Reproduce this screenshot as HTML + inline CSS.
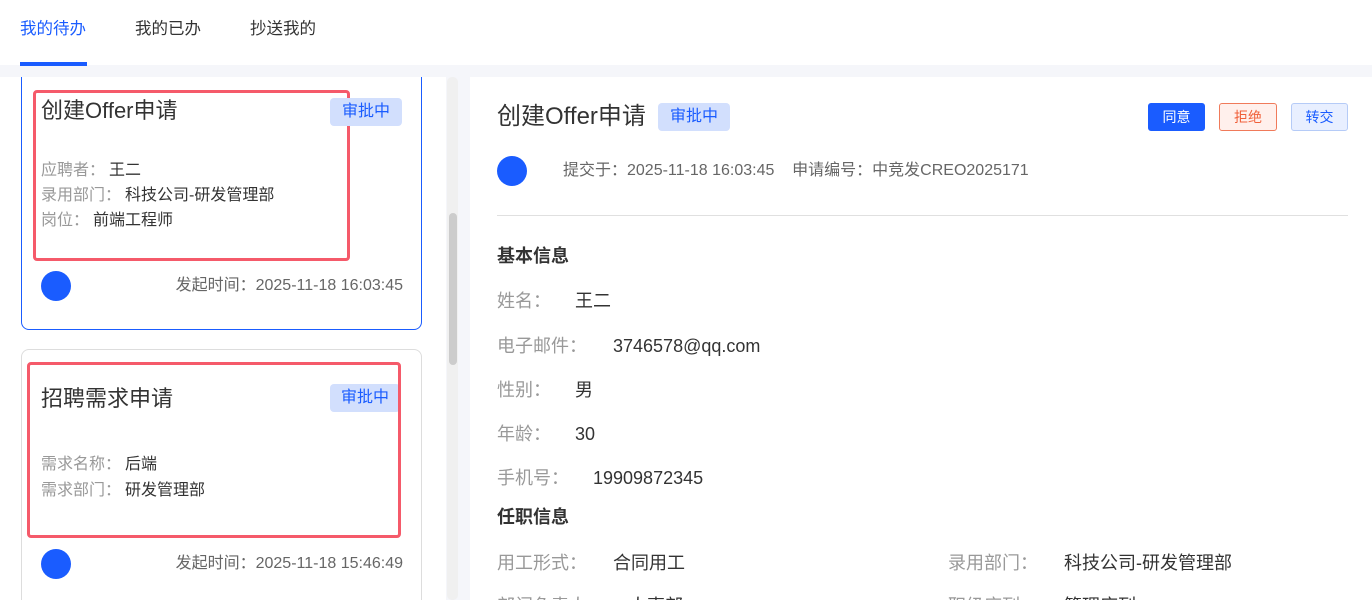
<!DOCTYPE html>
<html style="overflow:hidden;height:600px"><head><meta charset="utf-8"><style>
*{margin:0;padding:0;box-sizing:border-box}
body{width:1372px;height:600px;overflow:hidden;background:#f5f6fa;font-family:"Liberation Sans","Noto Sans CJK SC",sans-serif;color:#333}
#w{position:relative;width:1372px;height:600px;overflow:hidden}
.a{position:absolute;white-space:nowrap}
.hdr{left:0;top:0;width:1372px;height:65px;background:#fff}
.tab{top:19px;font-size:16.5px;line-height:20px;color:#333}
.left{left:0;top:77px;width:446px;height:523px;background:#fff;overflow:hidden}
.card{position:absolute;left:21px;width:401px;border-radius:8px;background:#fff}
.red{position:absolute;border:3px solid #f55a6a;border-radius:4px}
.t{font-size:22px;color:#333;line-height:28px}
.tag{background:#d2dffd;color:#1a5cff;font-size:16px;line-height:28px;text-align:center;border-radius:4px}
.f{font-size:16px;line-height:22px;color:#333}
.f span{color:#999;margin-right:4px}
.dot{width:30px;height:30px;border-radius:50%;background:#1a5cff}
.tm{font-size:16px;color:#666;line-height:22px}
.right{left:470px;top:77px;width:902px;height:523px;background:#fff}
.btn{top:103px;height:28px;width:57px;border-radius:3px;font-size:14px;line-height:26px;text-align:center;border:1px solid}
.lb{font-size:18px;color:#999;line-height:24px}
.lb b{font-weight:normal;color:#333;margin-left:24px}
.h{font-size:18px;font-weight:bold;color:#333;line-height:24px}
</style></head><body><div id="w">
<div class="a hdr"></div>
<div class="a tab" style="left:20px;color:#1a5cff">我的待办</div>
<div class="a tab" style="left:135px">我的已办</div>
<div class="a tab" style="left:250px">抄送我的</div>
<div class="a" style="left:20px;top:62px;width:67px;height:4px;background:#1a5cff"></div>

<div class="a left">
 <div class="card" style="top:-20px;height:273px;border:1px solid #1a5cff"></div>
 <div class="card" style="top:272px;height:300px;border:1px solid #ddd"></div>
</div>
<div class="a" style="left:447px;top:77px;width:11px;height:523px;background:#f0f0f0;border-radius:5px"></div>
<div class="a" style="left:449px;top:213px;width:8px;height:152px;background:#ccc;border-radius:4px"></div>

<div class="red a" style="left:33px;top:90px;width:317px;height:171px"></div>
<div class="a t" style="left:41px;top:97px">创建Offer申请</div>
<div class="a tag" style="left:330px;top:98px;width:72px">审批中</div>
<div class="a f" style="left:41px;top:160px"><span>应聘者：</span>王二</div>
<div class="a f" style="left:41px;top:185px"><span>录用部门：</span>科技公司-研发管理部</div>
<div class="a f" style="left:41px;top:210px"><span>岗位：</span>前端工程师</div>
<div class="a dot" style="left:41px;top:271px"></div>
<div class="a tm" style="right:969px;top:275px">发起时间：2025-11-18 16:03:45</div>

<div class="a tag" style="left:330px;top:384px;width:70px">审批中</div>
<div class="red a" style="left:27px;top:362px;width:374px;height:176px"></div>
<div class="a t" style="left:41px;top:385px">招聘需求申请</div>
<div class="a f" style="left:41px;top:454px"><span>需求名称：</span>后端</div>
<div class="a f" style="left:41px;top:480px"><span>需求部门：</span>研发管理部</div>
<div class="a dot" style="left:41px;top:549px"></div>
<div class="a tm" style="right:969px;top:553px">发起时间：2025-11-18 15:46:49</div>

<div class="a right"></div>
<div class="a" style="left:497px;top:102px;font-size:24px;line-height:30px">创建Offer申请</div>
<div class="a tag" style="left:658px;top:103px;width:72px">审批中</div>
<div class="a btn" style="left:1148px;background:#1a5cff;border-color:#1a5cff;color:#fff">同意</div>
<div class="a btn" style="left:1219px;width:58px;background:#fff0ec;border-color:#f07a5a;color:#f0603a">拒绝</div>
<div class="a btn" style="left:1291px;background:#e8efff;border-color:#b5cbf7;color:#1a5cff">转交</div>
<div class="a dot" style="left:497px;top:156px"></div>
<div class="a tm" style="left:563px;top:160px">提交于：2025-11-18 16:03:45&nbsp;&nbsp;&nbsp;&nbsp;申请编号：中竞发CREO2025171</div>
<div class="a" style="left:497px;top:215px;width:851px;height:1px;background:#e0e0e0"></div>
<div class="a h" style="left:497px;top:244px">基本信息</div>
<div class="a lb" style="left:497px;top:289px">姓名：<b>王二</b></div>
<div class="a lb" style="left:497px;top:334px">电子邮件：<b style="margin-left:26px">3746578@qq.com</b></div>
<div class="a lb" style="left:497px;top:378px">性别：<b>男</b></div>
<div class="a lb" style="left:497px;top:422px">年龄：<b>30</b></div>
<div class="a lb" style="left:497px;top:466px">手机号：<b>19909872345</b></div>
<div class="a h" style="left:497px;top:505px">任职信息</div>
<div class="a lb" style="left:497px;top:551px">用工形式：<b style="margin-left:26px">合同用工</b></div>
<div class="a lb" style="left:948px;top:551px">录用部门：<b style="margin-left:26px">科技公司-研发管理部</b></div>
<div class="a lb" style="left:497px;top:594px">部门负责人：<b>人事部</b></div>
<div class="a lb" style="left:948px;top:594px">职级序列：<b style="margin-left:26px">管理序列</b></div>
</div></body></html>
